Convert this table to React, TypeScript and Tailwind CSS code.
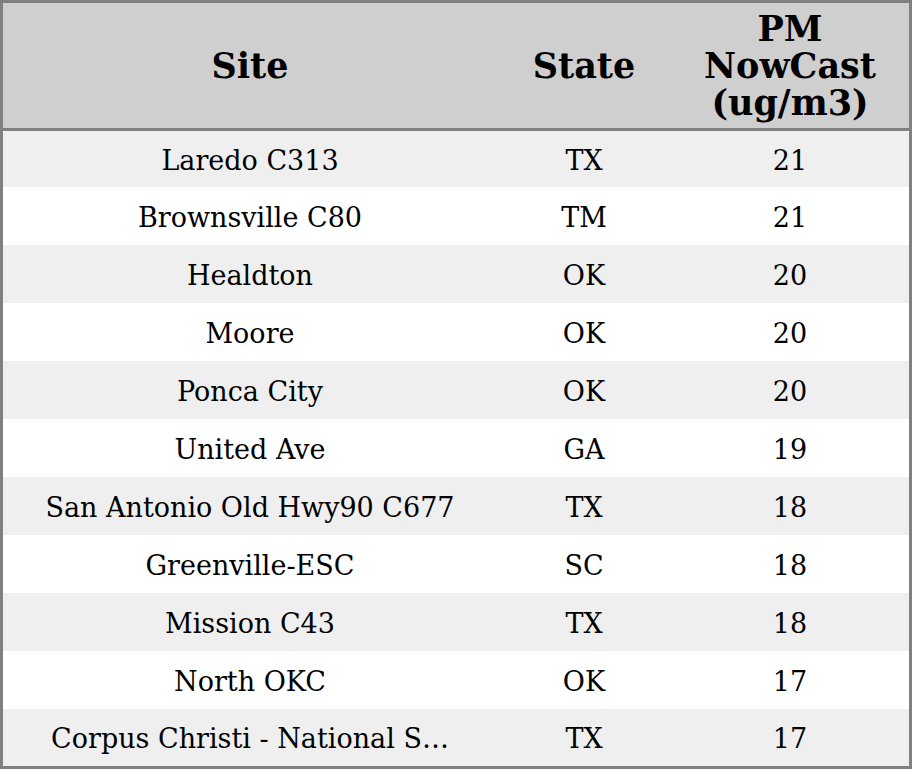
import * as React from "react";

const rows = [
  { site: "Laredo C313", state: "TX", pm: 21 },
  { site: "Brownsville C80", state: "TM", pm: 21 },
  { site: "Healdton", state: "OK", pm: 20 },
  { site: "Moore", state: "OK", pm: 20 },
  { site: "Ponca City", state: "OK", pm: 20 },
  { site: "United Ave", state: "GA", pm: 19 },
  { site: "San Antonio Old Hwy90 C677", state: "TX", pm: 18 },
  { site: "Greenville-ESC", state: "SC", pm: 18 },
  { site: "Mission C43", state: "TX", pm: 18 },
  { site: "North OKC", state: "OK", pm: 17 },
  { site: "Corpus Christi - National S…", state: "TX", pm: 17 },
];

export default function App() {
  return (
    <div className="w-[912px] h-[769px] bg-white font-['DejaVu_Serif',serif] text-black">
      <div className="flex flex-col h-full border-[3px] border-[#808080]">
        <div className="flex h-[128px] shrink-0 items-center bg-[#cfcfcf] border-b-[3px] border-[#808080] text-[35px] leading-[37px] font-bold text-center">
          <div className="w-[494px]">Site</div>
          <div className="w-[174px]">State</div>
          <div className="flex-1">
            PM
            <br />
            NowCast
            <br />
            (ug/m3)
          </div>
        </div>
        <div className="flex flex-col">
          {rows.map((r, i) => (
            <div
              key={i}
              className={`flex items-center pt-[4px] text-center text-[27px] ${
                i === 0 ? "h-[56px]" : i === rows.length - 1 ? "h-[57px]" : "h-[58px]"
              } ${i % 2 === 0 ? "bg-[#efefef]" : "bg-white"}`}
            >
              <div className="w-[494px] whitespace-nowrap">{r.site}</div>
              <div className="w-[174px]">{r.state}</div>
              <div className="flex-1">{r.pm}</div>
            </div>
          ))}
        </div>
      </div>
    </div>
  );
}
